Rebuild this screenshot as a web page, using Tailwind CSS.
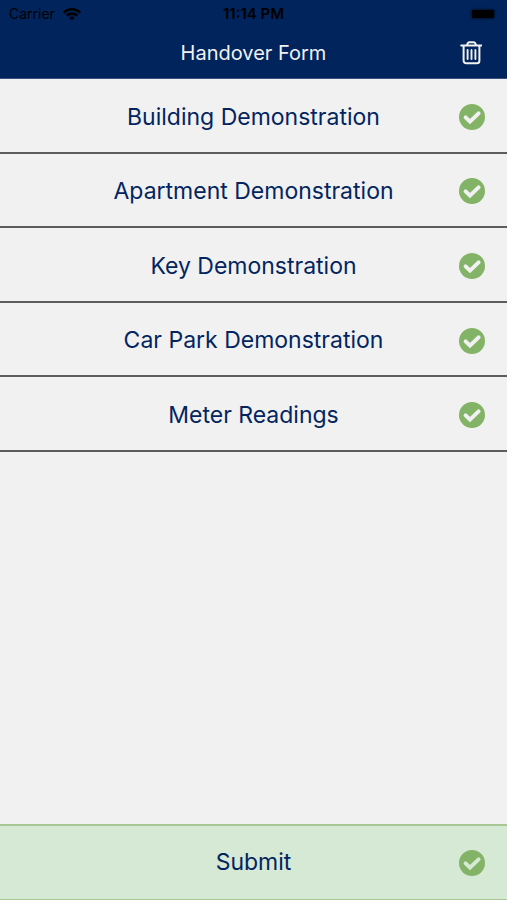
<!DOCTYPE html>
<html lang="en">
<head>
<meta charset="utf-8">
<meta name="viewport" content="width=device-width, initial-scale=1">
<title>Handover Form</title>
<script src="https://cdn.jsdelivr.net/npm/@tailwindcss/browser@4"></script>
</head>
<body class="flex min-h-screen flex-col bg-[#f1f1f1] font-['Inter','Liberation_Sans',sans-serif] text-[#03255f]">
<svg class="hidden" aria-hidden="true">
  <symbol id="check" viewBox="0 0 26 26">
    <circle cx="13" cy="13" r="13" fill="#82b366"/>
    <path d="M6.6 13.4 11 17.6 19.6 9.4" fill="none" stroke="currentColor" stroke-width="4" stroke-linejoin="miter" stroke-linecap="round"/>
  </symbol>
</svg>
<header class="border-b border-[#3a527f] bg-[#01245c]">
  <div class="grid h-7 grid-cols-3 items-center px-[9px] text-black">
    <div class="flex items-center gap-2 text-sm">
      <span>Carrier</span>
      <svg class="h-3 w-[18px]" viewBox="0 0 18 12" fill="none" stroke="currentColor" stroke-width="2.6" aria-label="Wi-Fi">
        <path d="M.8 4.6C5.4 .2 12.6 .2 17.2 4.6M3.7 7.7c2.8-2.8 7.8-2.8 10.6 0"/>
        <path d="M9 12.4 6.2 9.6c1.5-1.5 4.1-1.5 5.6 0Z" fill="currentColor" stroke="none"/>
      </svg>
    </div>
    <span class="text-center text-[15px] font-semibold">11:14 PM</span>
    <span class="mr-1 h-2 w-[22px] justify-self-end bg-black shadow-[0_0_3px_black]" role="img" aria-label="Battery"></span>
  </div>
  <div class="grid h-[50px] grid-cols-[44px_1fr_44px] items-center px-[14px]">
    <h1 class="col-start-2 text-center text-xl text-[#f1f1f1]">Handover Form</h1>
    <button type="button" aria-label="Delete form" class="flex h-11 w-11 items-center justify-center text-[#f1f1f1]">
      <svg class="h-6 w-[22px]" viewBox="0 0 22 24" fill="none" stroke="currentColor" stroke-width="2" stroke-linecap="round" stroke-linejoin="round">
        <path d="M1.2 4.6H21.8M7 4.2C7.4 2 8.3 1.2 9.5 1.2h4c1.2 0 2.1.8 2.5 3M3.6 5v14.8a2.5 2.5 0 0 0 2.5 2.5h10.8a2.5 2.5 0 0 0 2.5-2.5V5"/>
        <path d="M7.6 9v9M11.5 9v9M15.4 9v9" stroke-width="1.9"/>
      </svg>
    </button>
  </div>
</header>
<main class="flex grow flex-col">
  <nav class="grid h-[373px] grid-rows-5 text-center text-[23px]" aria-label="Form sections">
    <a href="#building" class="grid grid-cols-[26px_1fr_26px] items-center border-b-2 border-[#5c5c5c] px-[22px] pt-[3px]"><span class="col-start-2">Building Demonstration</span><svg class="h-[26px] w-[26px] text-[#f1f1f1]" role="img" aria-label="Complete"><use href="#check"/></svg></a>
    <a href="#apartment" class="grid grid-cols-[26px_1fr_26px] items-center border-b-2 border-[#5c5c5c] px-[22px] pt-[3px]"><span class="col-start-2">Apartment Demonstration</span><svg class="h-[26px] w-[26px] text-[#f1f1f1]" role="img" aria-label="Complete"><use href="#check"/></svg></a>
    <a href="#key" class="grid grid-cols-[26px_1fr_26px] items-center border-b-2 border-[#5c5c5c] px-[22px] pt-[3px]"><span class="col-start-2">Key Demonstration</span><svg class="h-[26px] w-[26px] text-[#f1f1f1]" role="img" aria-label="Complete"><use href="#check"/></svg></a>
    <a href="#car-park" class="grid grid-cols-[26px_1fr_26px] items-center border-b-2 border-[#5c5c5c] px-[22px] pt-[3px]"><span class="col-start-2">Car Park Demonstration</span><svg class="h-[26px] w-[26px] text-[#f1f1f1]" role="img" aria-label="Complete"><use href="#check"/></svg></a>
    <a href="#meter" class="grid grid-cols-[26px_1fr_26px] items-center border-b-2 border-[#5c5c5c] px-[22px] pt-[3px]"><span class="col-start-2">Meter Readings</span><svg class="h-[26px] w-[26px] text-[#f1f1f1]" role="img" aria-label="Complete"><use href="#check"/></svg></a>
  </nav>
  <button type="submit" class="mt-auto grid h-[76px] w-full grid-cols-[26px_1fr_26px] items-center border-t-2 border-b border-[#a9c795] bg-[#d5e9d5] px-[22px] text-[23px]"><span class="col-start-2">Submit</span><svg class="h-[26px] w-[26px] text-[#d5e9d5]" role="img" aria-label="Complete"><use href="#check"/></svg></button>
</main>
</body>
</html>
